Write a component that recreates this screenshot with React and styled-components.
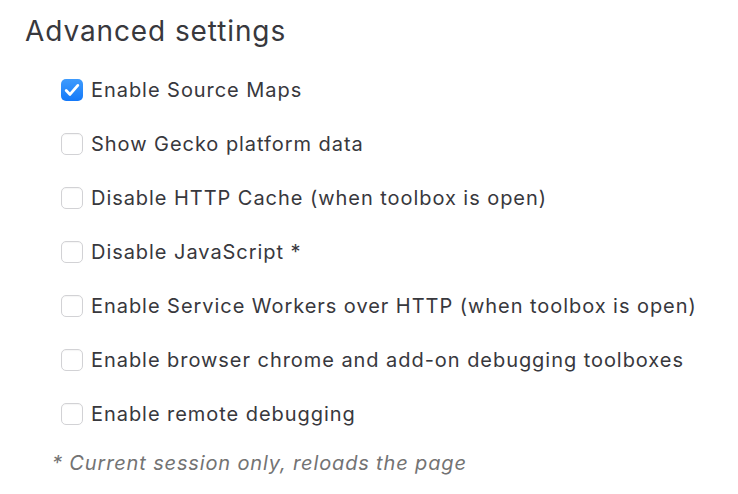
import React from "react";
import styled, { createGlobalStyle } from "styled-components";

const Global = createGlobalStyle`
  html, body { margin: 0; padding: 0; background: #fff; }
  body { font-family: Inter, "Liberation Sans", Arial, sans-serif; color: #38383d; }
`;

const Page = styled.div`
  padding: 14px 0 0 25px;
`;

const Title = styled.h1`
  margin: 0;
  font-size: 28px;
  font-weight: 400;
  letter-spacing: 0.9px;
  color: #38383d;
  line-height: 34px;
`;

const List = styled.div`
  display: flex;
  flex-direction: column;
  gap: 32px;
  margin: 31px 0 0 36px;
`;

const Row = styled.label`
  display: flex;
  align-items: center;
  gap: 8px;
  height: 22px;
  font-size: 20px;
  letter-spacing: 0.95px;
  color: #38383d;
`;

const Box = styled.span`
  width: 22px;
  height: 22px;
  box-sizing: border-box;
  border-radius: 5px;
  flex: none;
  display: flex;
  align-items: center;
  justify-content: center;
  border: ${(p) => (p.$checked ? "none" : "1px solid #d2d2d5")};
  background: ${(p) =>
    p.$checked ? "linear-gradient(#3e9bfd, #1479f9)" : "#fff"};
  box-shadow: ${(p) => (p.$checked ? "none" : "inset 0 1px 1px rgba(0,0,0,0.04)")};
`;

const Note = styled.p`
  margin: 26px 0 0 27px;
  font-size: 20px;
  font-style: italic;
  letter-spacing: 0.85px;
  color: #737373;
`;

const items = [
  ["Enable Source Maps", true],
  ["Show Gecko platform data", false],
  ["Disable HTTP Cache (when toolbox is open)", false],
  ["Disable JavaScript *", false],
  ["Enable Service Workers over HTTP (when toolbox is open)", false],
  ["Enable browser chrome and add-on debugging toolboxes", false],
  ["Enable remote debugging", false],
];

export default function App() {
  return (
    <Page>
      <Global />
      <Title>Advanced settings</Title>
      <List>
        {items.map(([t, c]) => (
          <Row key={t}>
            <Box $checked={c}>
              {c && (
                <svg width="16" height="14" viewBox="0 0 16 14">
                  <path
                    d="M2.2 7.6 L6 11.4 L13.8 2.4"
                    fill="none"
                    stroke="#fff"
                    strokeWidth="2.8"
                    strokeLinecap="round"
                    strokeLinejoin="round"
                  />
                </svg>
              )}
            </Box>
            {t}
          </Row>
        ))}
      </List>
      <Note>* Current session only, reloads the page</Note>
    </Page>
  );
}
